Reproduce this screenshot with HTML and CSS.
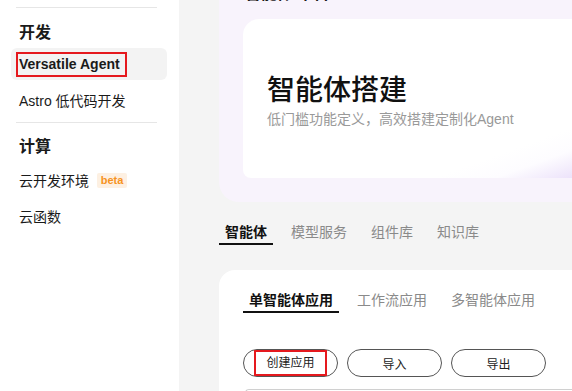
FILE: index.html
```html
<!DOCTYPE html>
<html>
    <head>
        <meta charset="UTF-8">
        <meta name="viewport" content="width=device-width, initial-scale=1.0">
        <title>智能体搭建</title>
        <link rel="stylesheet" href="styles.css">
    </head>
    <body>
        <div class="page">
            <aside class="sidebar">
                <div class="side-divider"></div>
                <div class="side-title">开发</div>
                <div class="side-item active"><span class="marked-text">Versatile Agent</span></div>
                <div class="side-item">Astro 低代码开发</div>
                <div class="side-divider second"></div>
                <div class="side-title">计算</div>
                <div class="side-item">云开发环境<span class="beta">beta</span></div>
                <div class="side-item">云函数</div>
            </aside>
            <main class="main">
                <section class="hero">
                    <h2 class="hero-heading">智能体 平台</h2>
                    <div class="hero-card">
                        <h1 class="hero-title">智能体搭建</h1>
                        <p class="hero-sub">低门槛功能定义，高效搭建定制化Agent</p>
                    </div>
                </section>
                <nav class="tabs">
                    <div class="tab active">智能体</div>
                    <div class="tab">模型服务</div>
                    <div class="tab">组件库</div>
                    <div class="tab">知识库</div>
                </nav>
                <section class="panel">
                    <div class="tabs sub-tabs">
                        <div class="tab active">单智能体应用</div>
                        <div class="tab">工作流应用</div>
                        <div class="tab">多智能体应用</div>
                    </div>
                    <div class="actions">
                        <button class="pill"><span class="marked-btn">创建应用</span></button>
                        <button class="pill">导入</button>
                        <button class="pill">导出</button>
                    </div>
                    <div class="list-box"></div>
                </section>
            </main>
        </div>
    </body>
</html>
```

FILE: styles.css
```css
* {
    margin: 0;
    padding: 0;
    box-sizing: border-box;
}
body {
    font-family: "Liberation Sans", "Noto Sans CJK SC", sans-serif;
    background-color: #f4f4f4;
    color: #1a1a1a;
    overflow: hidden;
}
.page {
    display: flex;
    height: 391px;
    overflow: hidden;
}

/* sidebar */
.sidebar {
    width: 179px;
    flex: none;
    background-color: #fff;
    padding: 7px 12px 0 11px;
}
.side-divider {
    height: 1px;
    background-color: #e6e6e6;
    margin-left: 5px;
    margin-right: 10px;
}
.side-divider.second {
    margin-top: 6px;
}
.side-title {
    font-size: 16px;
    font-weight: bold;
    line-height: 24px;
    padding-left: 8px;
    margin-top: 13px;
    margin-bottom: 3px;
}
.side-divider.second + .side-title {
    margin-top: 12px;
    margin-bottom: 5px;
}
.side-item {
    height: 32px;
    display: flex;
    align-items: center;
    padding-left: 8px;
    font-size: 14px;
    border-radius: 6px;
    margin-bottom: 4px;
}
.side-item.active {
    background-color: #f3f3f3;
    font-weight: bold;
}
.marked-text {
    display: inline-block;
    line-height: 19px;
    padding-right: 4px;
    outline: 2px solid #e5191e;
    outline-offset: 1px;
}
.beta {
    display: inline-block;
    margin-left: 8px;
    width: 30px;
    height: 15px;
    line-height: 15px;
    text-align: center;
    font-size: 11px;
    font-weight: bold;
    color: #f7931e;
    background-color: #fdf0e2;
    border-radius: 2px;
}

/* main area */
.main {
    flex: 1;
    padding-left: 40px;
    min-width: 0;
}
.hero {
    background-color: #f8f3fc;
    border-radius: 0 0 0 20px;
    padding: 0 0 24px 24px;
    margin-top: -18px;
}
.hero-heading {
    font-size: 16px;
    line-height: 24px;
    padding-left: 2px;
    margin-bottom: 13px;
}
.hero-card {
    height: 159px;
    background: linear-gradient(160deg, #fff 82%, #fdfcff 90%, #ece2fa);
    border-radius: 16px 0 0 8px;
    padding: 4px 0 0 24px;
    display: flex;
    flex-direction: column;
    justify-content: center;
}
.hero-title {
    font-size: 28px;
    line-height: 36px;
    font-weight: 500;
    color: #111;
}
.hero-sub {
    font-size: 14px;
    line-height: 20px;
    color: #999;
}

.tabs {
    display: flex;
    gap: 12px;
    margin-top: 20px;
}
.tab {
    font-size: 14px;
    line-height: 20px;
    padding: 0 6px 1px;
    color: #8a8a8a;
    border-bottom: 2px solid transparent;
}
.tab.active {
    color: #111;
    font-weight: bold;
    border-bottom-color: #111;
}

.panel {
    margin-top: 25px;
    background-color: #fff;
    border-radius: 16px 0 0 0;
    padding: 20px 0 0 24px;
    height: 200px;
}
.sub-tabs {
    margin-top: 0;
}
.actions {
    display: flex;
    gap: 9px;
    margin-top: 36px;
}
.pill {
    width: 95px;
    height: 28px;
    border: 1px solid #555;
    border-radius: 14px;
    background-color: #fff;
    font-family: inherit;
    font-size: 12px;
    color: #222;
    display: flex;
    align-items: center;
    justify-content: center;
}
.marked-btn {
    display: inline-block;
    line-height: 22px;
    padding: 0 10px;
    border: 2px solid #e5191e;
}
.list-box {
    margin-top: 12px;
    margin-left: 2px;
    height: 40px;
    border: 1px solid #d0d0d0;
    border-right: none;
    border-radius: 4px 0 0 0;
}
```
